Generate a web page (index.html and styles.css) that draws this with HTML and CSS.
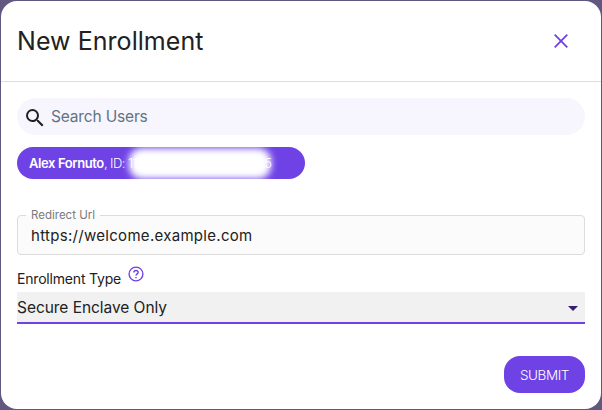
FILE: index.html
```html
<!DOCTYPE html>
<html lang="en">
<head>
<meta charset="utf-8">
<title>New Enrollment</title>
<link rel="stylesheet" href="styles.css">
</head>
<body>
<main class="dialog">
  <header class="header">
    <h1 class="title"><span>New Enrollment</span></h1>
    <button class="close" aria-label="Close"><svg width="14" height="14" viewBox="0 0 14 14"><path d="M.7.7 13.300 13.300M13.300.7.7 13.300"/></svg></button>
  </header>
  <section class="content">
    <div class="search">
      <svg class="search-icon" width="24" height="24" viewBox="0 0 24 24"><path d="M15.5 14h-.79l-.28-.27A6.47 6.47 0 0 0 16 9.500 6.500 6.500 0 1 0 9.500 16c1.610 0 3.090-.59 4.230-1.570l.27.28v.79l5 4.990L20.490 19l-4.990-5zm-6 0C7.010 14 5 11.990 5 9.500S7.010 5 9.500 5 14 7.010 14 9.500 11.990 14 9.500 14z"/></svg>
      <span class="placeholder">Search Users</span>
    </div>
    <div class="chip"><b class="chip-name">Alex Fornuto</b><span class="chip-id">, ID: 11</span><span class="chip-end">5</span><i class="redaction"></i></div>
    <fieldset class="field">
      <legend class="legend"><span>Redirect Url</span></legend>
      <span class="url">https://welcome.example.com</span>
    </fieldset>
    <div class="label-row">
      <span class="label">Enrollment Type</span>
      <svg class="help" width="16" height="16" viewBox="0 0 16 16"><circle cx="8" cy="8" r="6.900"/><path d="M5.900 6.500C5.900 5.200 6.800 4.500 8 4.500s2.100.8 2.100 1.900C10.100 7.800 8 7.900 8 9.600M8 10.900v1.300"/></svg>
    </div>
    <div class="select"><span class="value">Secure Enclave Only</span><i class="arrow"></i></div>
    <footer class="footer"><button class="submit"><span>SUBMIT</span></button></footer>
  </section>
</main>
</body>
</html>
```
FILE: styles.css
```css
* { box-sizing: border-box; }
body {
  margin: 0;
  padding: 1px;
  height: 410px;
  overflow: hidden;
  background: #625780;
  font-family: Inter, "Liberation Sans", sans-serif;
  color: #212121;
}
.dialog { height: 408px; background: #fff; border-radius: 16px; overflow: hidden; }
.header {
  display: flex;
  align-items: center;
  justify-content: space-between;
  height: 81px;
  padding: 0 33px 0 16px;
  border-bottom: 1px solid #dedede;
}
.title { margin: 0; font-size: 25px; line-height: 32px; font-weight: 400; letter-spacing: .05px; }
.close { display: flex; padding: 0; border: 0; background: none; }
.close path { fill: none; stroke: #6e41e5; stroke-width: 1.8; }
.content { padding: 16px; }
.search {
  display: flex;
  align-items: center;
  height: 37px;
  padding-left: 6px;
  border-radius: 19px;
  background: #f7f5fe;
}
.search-icon { fill: #212121; margin-top: 2px; }
.placeholder { margin-left: 4px; color: #5f7482; font-size: 15.5px; letter-spacing: -.16px; }
.chip {
  position: relative;
  display: flex;
  align-items: center;
  width: 288px;
  height: 32px;
  margin-top: 12px;
  padding: 0 33px 0 12px;
  border-radius: 16px;
  background: #6f42e6;
  color: #fff;
  font-size: 13px;
  overflow: hidden;
}
.chip-name { font-weight: 600; letter-spacing: -.4px; }
.chip-id { font-weight: 300; letter-spacing: -.55px; white-space: pre; }
.chip-end { margin-left: auto; font-weight: 300; }
.redaction {
  position: absolute;
  left: 112px;
  top: 1px;
  width: 142px;
  height: 31px;
  border-radius: 13px;
  background: #fff;
  filter: blur(3.5px);
}
.field {
  height: 46px;
  min-width: 0;
  margin: 30px 0 0;
  padding: 0 13px;
  border: 1px solid #dcdcdc;
  border-radius: 4px;
  background: #fbfbfb;
}
.legend { margin-left: -5px; padding: 0 5px; height: 13px; line-height: 13px; font-size: 11.5px; color: #7b7b7b; }
.url { display: block; line-height: 20px; margin-top: 4px; font-size: 15px; letter-spacing: .3px; }
.label-row { display: flex; height: 37px; padding-top: 11px; }
.label { line-height: 25px; font-size: 14px; letter-spacing: -.19px; }
.help { margin-left: 7px; fill: none; stroke: #6e41e5; stroke-width: 1.4; }
.select {
  display: flex;
  align-items: center;
  justify-content: space-between;
  height: 32px;
  padding-right: 7px;
  border-bottom: 2px solid #6f42e6;
  background: #f1f1f1;
}
.value { font-size: 15.5px; letter-spacing: -.05px; }
.arrow { margin-top: 2px; border: 5px solid transparent; border-top-color: #35206f; border-bottom: 0; }
.footer { display: flex; justify-content: flex-end; margin-top: 32px; }
.submit {
  width: 81px;
  height: 37px;
  padding: 0;
  border: 0;
  border-radius: 16px;
  background: #6f42e6;
  color: #fff;
  font: 350 13.5px Inter, "Liberation Sans", sans-serif;
  letter-spacing: -.4px;
}
```
